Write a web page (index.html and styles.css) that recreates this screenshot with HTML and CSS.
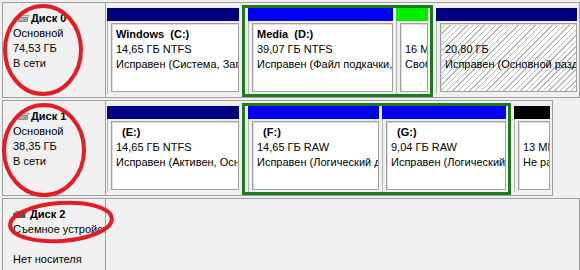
FILE: index.html
```html
<!DOCTYPE html>
<html lang="ru">
<head>
    <meta charset="UTF-8">
    <title>Управление дисками</title>
    <link rel="stylesheet" href="styles.css">
</head>
<body>
    <div class="disk">
        <div class="disk-info">
            <div class="disk-name">
                <svg class="icon hdd" width="12" height="7" viewBox="0 0 12 7">
                    <path d="M2.5 .5h9l-2 2h-9z" fill="#e6e6e6" stroke="#808080" stroke-width=".7"/>
                    <rect x=".5" y="2.5" width="9" height="4" fill="#b0b0b0" stroke="#707070" stroke-width=".7"/>
                    <rect x="6" y="4" width="2.5" height="1.2" fill="#22c322"/>
                </svg>Диск 0
            </div>
            <div>Основной</div>
            <div>74,53 ГБ</div>
            <div>В сети</div>
        </div>
        <div class="layout">
            <div class="slot">
                <div class="part primary" style="width: 132px">
                    <div class="bar"></div>
                    <div class="cell"><div class="box">
                        <b>Windows&nbsp; (C:)</b>
                        <span>14,65 ГБ NTFS</span>
                        <span>Исправен (Система, Загрузка, Файл подкачки, Активен, Аварийный дамп, Основной раздел)</span>
                    </div></div>
                </div>
            </div>
            <div class="slot extended">
                <div class="part logical" style="width: 145px">
                    <div class="bar"></div>
                    <div class="cell"><div class="box">
                        <b>Media&nbsp; (D:)</b>
                        <span>39,07 ГБ NTFS</span>
                        <span>Исправен (Файл подкачки, Логический диск)</span>
                    </div></div>
                </div>
                <div class="part free" style="width: 32px">
                    <div class="bar"></div>
                    <div class="cell"><div class="box">
                        <b>&nbsp;</b>
                        <span>16 МБ</span>
                        <span>Свободно</span>
                    </div></div>
                </div>
            </div>
            <div class="slot">
                <div class="part primary" style="width: 141px">
                    <div class="bar"></div>
                    <div class="cell"><div class="box hatched">
                        <b>&nbsp;</b>
                        <span>20,80 ГБ</span>
                        <span>Исправен (Основной раздел)</span>
                    </div></div>
                </div>
            </div>
        </div>
    </div>

    <div class="disk">
        <div class="disk-info">
            <div class="disk-name">
                <svg class="icon hdd" width="12" height="7" viewBox="0 0 12 7">
                    <path d="M2.5 .5h9l-2 2h-9z" fill="#e6e6e6" stroke="#808080" stroke-width=".7"/>
                    <rect x=".5" y="2.5" width="9" height="4" fill="#b0b0b0" stroke="#707070" stroke-width=".7"/>
                    <rect x="6" y="4" width="2.5" height="1.2" fill="#22c322"/>
                </svg>Диск 1
            </div>
            <div>Основной</div>
            <div>38,35 ГБ</div>
            <div>В сети</div>
        </div>
        <div class="layout">
            <div class="slot">
                <div class="part primary" style="width: 132px">
                    <div class="bar"></div>
                    <div class="cell"><div class="box">
                        <b>&nbsp;&nbsp;(E:)</b>
                        <span>14,65 ГБ NTFS</span>
                        <span>Исправен (Активен, Основной раздел)</span>
                    </div></div>
                </div>
            </div>
            <div class="slot extended">
                <div class="part logical" style="width: 131px">
                    <div class="bar"></div>
                    <div class="cell"><div class="box">
                        <b>&nbsp;&nbsp;(F:)</b>
                        <span>14,65 ГБ RAW</span>
                        <span>Исправен (Логический диск)</span>
                    </div></div>
                </div>
                <div class="part logical" style="width: 124px">
                    <div class="bar"></div>
                    <div class="cell"><div class="box">
                        <b>&nbsp;&nbsp;(G:)</b>
                        <span>9,04 ГБ RAW</span>
                        <span>Исправен (Логический диск)</span>
                    </div></div>
                </div>
            </div>
            <div class="slot">
                <div class="part unallocated" style="width: 36px">
                    <div class="bar"></div>
                    <div class="cell"><div class="box">
                        <b>&nbsp;</b>
                        <span>13 МБ</span>
                        <span>Не распределена</span>
                    </div></div>
                </div>
            </div>
        </div>
    </div>

    <div class="disk">
        <div class="disk-info">
            <div class="disk-name">
                <svg class="icon removable" width="15" height="7" viewBox="0 0 15 7">
                    <path d="M3 .5h11.5l-2.5 2.5h-11.5z" fill="#8a8a8a" stroke="#505050" stroke-width=".7"/>
                    <rect x=".5" y="3" width="11.5" height="3.5" fill="#5a5a5a" stroke="#404040" stroke-width=".7"/>
                </svg>Диск 2
            </div>
            <div>Съемное устройство</div>
            <div>&nbsp;</div>
            <div>Нет носителя</div>
        </div>
        <div class="layout empty"></div>
    </div>

    <svg class="marks" width="580" height="270" viewBox="0 0 580 270">
        <ellipse cx="43" cy="50" rx="38" ry="44"/>
        <ellipse cx="44" cy="150" rx="40" ry="45"/>
        <ellipse cx="61" cy="222" rx="51" ry="19" transform="rotate(-4 61 222)"/>
    </svg>
</body>
</html>
```

FILE: styles.css
```css
* {
    box-sizing: border-box;
}

body {
    position: relative;
    margin: 0;
    width: 580px;
    height: 270px;
    overflow: hidden;
    background: #f0f0f0;
    font-family: "Liberation Sans", Arial, sans-serif;
    font-size: 11px;
    line-height: 15px;
    color: #000;
}

/* one row per disk */
.disk {
    display: flex;
    width: fit-content;
    height: 96px;
    margin: 2px 0 1px 2px;
    border: 1px solid #a0a0a0;
}

.disk-info {
    width: 103px;
    padding: 8px 0 0 10px;
    border-right: 1px solid #a0a0a0;
    white-space: nowrap;
    overflow: hidden;
}

.disk-name {
    display: flex;
    align-items: center;
    font-weight: bold;
}

.icon {
    flex: none;
    margin-right: 1px;
}

.hdd {
    margin-left: 5px;
}

.removable {
    margin-right: 2px;
}

.layout {
    display: flex;
    gap: 3px;
    padding: 2px 2px 0 1px;
}

.layout.empty {
    width: 473px;
}

.slot {
    display: flex;
    gap: 3px;
    border-top: 3px solid transparent;
    border-bottom: 3px solid transparent;
}

.slot.extended {
    border: 3px solid #1c7c1c;
    padding: 0 2px 0 3px;
}

.part {
    display: flex;
    flex-direction: column;
}

.bar {
    flex: none;
    height: 13px;
}

.primary .bar {
    background: #000080;
}

.logical .bar {
    background: #0000f6;
}

.free .bar {
    background: #00f000;
}

.unallocated .bar {
    background: #000;
}

.cell {
    flex: 1;
    display: flex;
    border-left: 1px solid #b4b4b4;
    padding: 2px 0 2px 3px;
}

.box {
    flex: 1;
    min-width: 0;
    background: #fff;
    border: 1px solid #a0a0a0;
    box-shadow: inset 1px 1px 0 #dcdcdc;
    padding: 3px 4px;
    white-space: nowrap;
    overflow: hidden;
}

.box b,
.box span {
    display: block;
}

.box.hatched {
    background: repeating-linear-gradient(135deg, #fff 0 3px, #b8b8b8 3px 4px);
}

/* red annotation rings drawn over the screenshot */
.marks {
    position: absolute;
    left: 0;
    top: 0;
    fill: none;
    stroke: #e41c24;
    stroke-width: 4;
    pointer-events: none;
}
```
